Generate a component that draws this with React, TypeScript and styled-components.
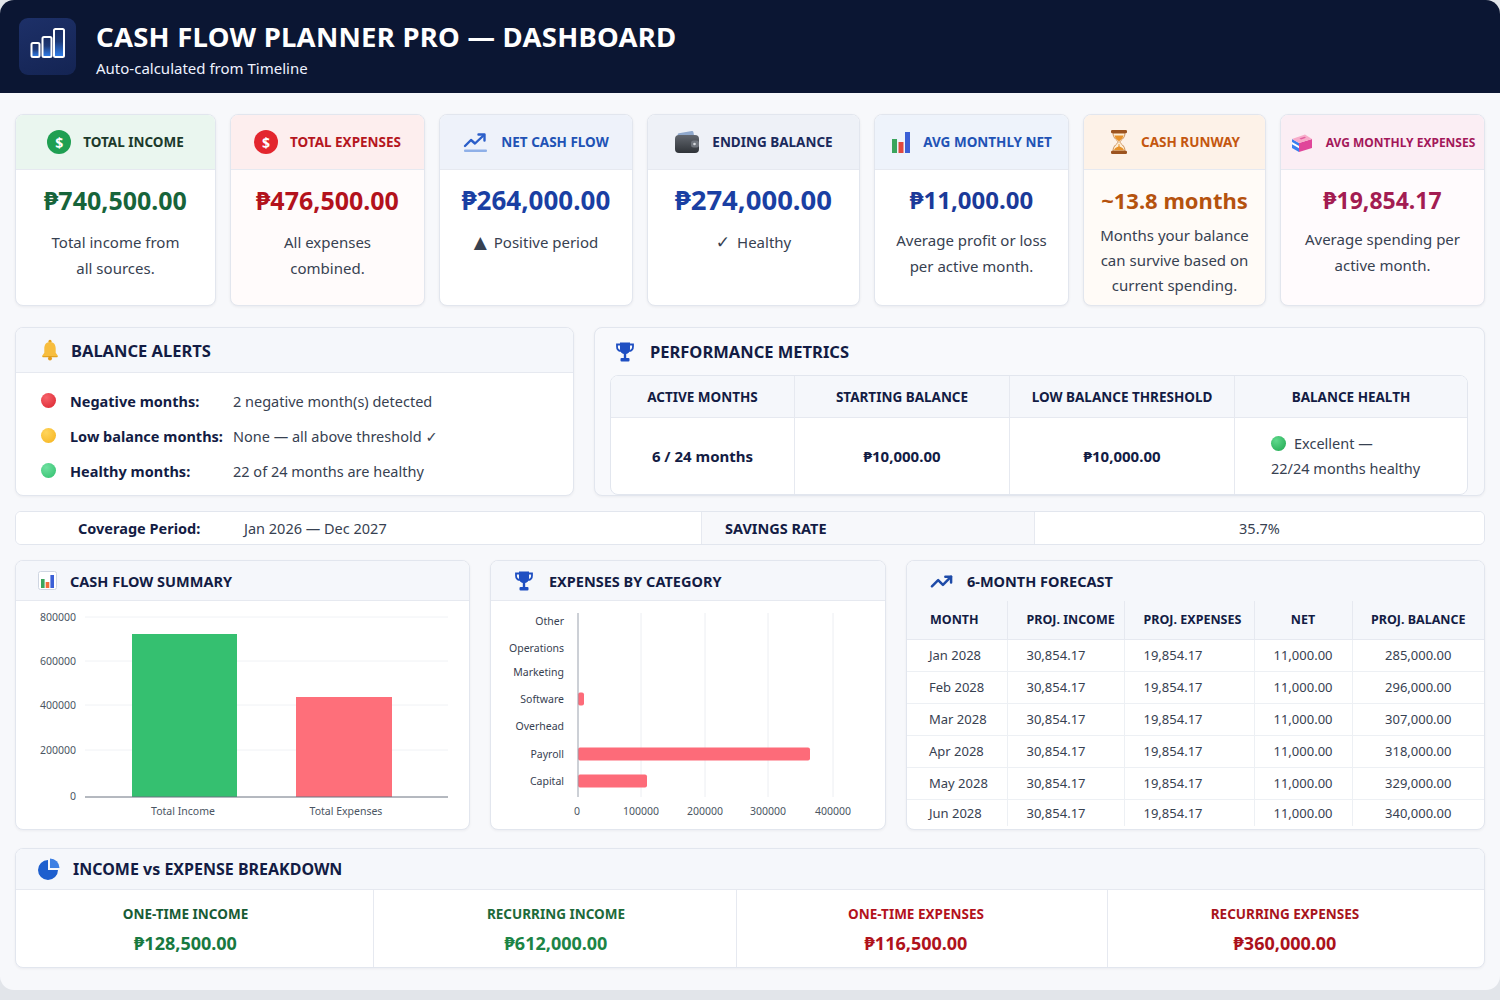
import React from "react";
import styled, { createGlobalStyle } from "styled-components";
import { TrendingUp } from "lucide-react";

const FONT = `"Noto Sans", "Open Sans", "DejaVu Sans", sans-serif`;
const NAVY = "#131c44";
const LINE = "#e6e9f0";

const GlobalStyle = createGlobalStyle`
  *, *::before, *::after { box-sizing: border-box; }
  html, body { margin: 0; padding: 0; }
  body { background: #e2e5ea; font-family: ${FONT}; color: #1f2937; }
`;

const Window = styled.div`
  width: 1500px;
  height: 990px;
  border-radius: 14px;
  overflow: hidden;
  background: #f7f8fb;
  display: flex;
  flex-direction: column;
`;

/* ---------- header ---------- */
const Header = styled.header`
  height: 93px;
  flex: none;
  background: #0b1633;
  display: flex;
  align-items: center;
  gap: 20px;
  padding-left: 19px;
`;
const LogoBox = styled.div`
  width: 57px;
  height: 57px;
  border-radius: 9px;
  background: linear-gradient(160deg, #1d3068 0%, #142453 100%);
  display: flex;
  align-items: center;
  justify-content: center;
`;
const TitleBlock = styled.div`
  display: flex;
  flex-direction: column;
  padding-top: 4px;
`;
const Title = styled.h1`
  margin: 0;
  font-size: 27.5px;
  line-height: 34px;
  font-weight: 700;
  color: #ffffff;
  letter-spacing: 0.25px;
`;
const Subtitle = styled.div`
  margin-top: 4px;
  font-size: 15px;
  line-height: 20px;
  color: #eef2ff;
`;

/* ---------- layout ---------- */
const Main = styled.main`
  padding: 21px 15px 0;
  display: flex;
  flex-direction: column;
`;
const Row = styled.div<{ $cols: string; $gap: number; $mt: number }>`
  display: grid;
  grid-template-columns: ${(p) => p.$cols};
  column-gap: ${(p) => p.$gap}px;
  margin-top: ${(p) => p.$mt}px;
`;

/* ---------- KPI cards ---------- */
const KpiCard = styled.div<{ $body: string }>`
  height: 192px;
  background: ${(p) => p.$body};
  border: 1px solid #e2e6ee;
  border-radius: 8px;
  overflow: hidden;
  box-shadow: 0 1px 3px rgba(15, 23, 42, 0.06);
`;
const KpiHead = styled.div<{ $bg: string }>`
  height: 55px;
  display: flex;
  align-items: center;
  justify-content: center;
  gap: 12px;
  background: ${(p) => p.$bg};
  border-bottom: 1px solid ${LINE};
`;
const KpiTitle = styled.div<{ $color: string; $size: number }>`
  font-size: ${(p) => p.$size}px;
  font-weight: 700;
  color: ${(p) => p.$color};
  white-space: nowrap;
`;
const KpiBody = styled.div`
  padding: 12px 8px 0;
  text-align: center;
`;
const KpiValue = styled.div<{ $color: string; $size: number }>`
  font-size: ${(p) => p.$size}px;
  line-height: 36px;
  font-weight: 700;
  color: ${(p) => p.$color};
  white-space: nowrap;
`;
const KpiDesc = styled.div<{ $mt: number; $lh: number }>`
  margin-top: ${(p) => p.$mt}px;
  font-size: 15px;
  line-height: ${(p) => p.$lh}px;
  color: #374151;
`;
const Glyph = styled.span`
  display: inline-block;
  font-size: 17px;
  margin-right: 7px;
  color: #374151;
`;
const DollarBadge = styled.span<{ $bg: string }>`
  width: 24px;
  height: 24px;
  border-radius: 50%;
  background: ${(p) => p.$bg};
  color: #fff;
  font-weight: 700;
  font-size: 14px;
  display: inline-flex;
  align-items: center;
  justify-content: center;
`;

/* ---------- panels ---------- */
const Panel = styled.section<{ $bg?: string; $h: number }>`
  height: ${(p) => p.$h}px;
  background: ${(p) => p.$bg ?? "#ffffff"};
  border: 1px solid #e2e6ee;
  border-radius: 8px;
  overflow: hidden;
  box-shadow: 0 1px 3px rgba(15, 23, 42, 0.05);
  display: flex;
  flex-direction: column;
`;
const PanelHead = styled.div<{ $h: number; $pl: number; $gap: number; $bg?: string; $line?: boolean }>`
  height: ${(p) => p.$h}px;
  flex: none;
  display: flex;
  align-items: center;
  gap: ${(p) => p.$gap}px;
  padding-left: ${(p) => p.$pl}px;
  background: ${(p) => p.$bg ?? "transparent"};
  border-bottom: ${(p) => (p.$line ? `1px solid ${LINE}` : "none")};
`;
const PanelTitle = styled.h2<{ $size: number }>`
  margin: 0;
  font-size: ${(p) => p.$size}px;
  font-weight: 700;
  color: ${NAVY};
  white-space: nowrap;
`;

/* alerts */
const AlertBody = styled.div`
  padding: 10px 0 0 25px;
  display: grid;
  grid-template-columns: 14px 148px 1fr;
  column-gap: 15px;
  grid-auto-rows: 35px;
  align-items: center;
`;
const Dot = styled.span<{ $c: string; $d: string }>`
  width: 15px;
  height: 15px;
  border-radius: 50%;
  background: radial-gradient(circle at 35% 30%, ${(p) => p.$c} 0%, ${(p) => p.$d} 100%);
  display: inline-block;
`;
const AlertLabel = styled.span`
  font-size: 14.5px;
  font-weight: 700;
  color: ${NAVY};
  white-space: nowrap;
`;
const AlertValue = styled.span`
  font-size: 14.5px;
  color: #374151;
  white-space: nowrap;
`;

/* metrics */
const MetricsWrap = styled.div`
  padding: 0 16px 1px 15px;
`;
const MetricsGrid = styled.div`
  display: grid;
  grid-template-columns: 184px 215px 225px 1fr;
  grid-template-rows: 42px 76px;
  background: #fff;
  border: 1px solid #e2e6ee;
  border-radius: 8px;
  overflow: hidden;
`;
const MetricHead = styled.div`
  display: flex;
  align-items: center;
  justify-content: center;
  background: #f5f7fb;
  border-bottom: 1px solid ${LINE};
  border-right: 1px solid ${LINE};
  font-size: 13.5px;
  font-weight: 700;
  color: ${NAVY};
  &:nth-child(4) { border-right: none; }
`;
const MetricCell = styled.div<{ $start?: boolean }>`
  display: flex;
  flex-direction: column;
  align-items: ${(p) => (p.$start ? "flex-start" : "center")};
  justify-content: center;
  padding-left: ${(p) => (p.$start ? 36 : 0)}px;
  border-right: 1px solid ${LINE};
  font-size: 15px;
  font-weight: 700;
  color: ${NAVY};
  &:last-child { border-right: none; }
`;
const HealthLine = styled.div`
  display: flex;
  align-items: center;
  gap: 8px;
  font-size: 14.5px;
  font-weight: 400;
  line-height: 25px;
  color: #374151;
`;

/* info bar */
const InfoBar = styled.div`
  margin-top: 15px;
  height: 34px;
  display: grid;
  grid-template-columns: 685px 333px 1fr;
  background: #fff;
  border: 1px solid #e2e6ee;
  border-radius: 6px;
  overflow: hidden;
`;
const InfoCell = styled.div<{ $bg?: string; $center?: boolean; $pl?: number }>`
  display: flex;
  align-items: center;
  justify-content: ${(p) => (p.$center ? "center" : "flex-start")};
  padding-left: ${(p) => p.$pl ?? 0}px;
  background: ${(p) => p.$bg ?? "#fff"};
  border-left: 1px solid ${LINE};
  font-size: 14.5px;
  color: #374151;
  &:first-child { border-left: none; }
`;
const InfoLabel = styled.span<{ $w?: number }>`
  width: ${(p) => (p.$w ? `${p.$w}px` : "auto")};
  font-weight: 700;
  color: ${NAVY};
  white-space: nowrap;
`;

/* forecast table */
const ForecastTable = styled.table`
  width: 100%;
  border-collapse: collapse;
  table-layout: fixed;
`;
const Col = styled.col<{ $w: number }>`
  width: ${(p) => p.$w}px;
`;
const Th = styled.th<{ $center?: boolean; $pl?: number }>`
  height: 38px;
  padding: 0 0 0 ${(p) => p.$pl ?? 0}px;
  text-align: ${(p) => (p.$center ? "center" : "left")};
  background: #f5f7fb;
  font-size: 12.5px;
  font-weight: 700;
  color: ${NAVY};
  border-bottom: 1px solid ${LINE};
  border-right: 1px solid ${LINE};
  white-space: nowrap;
  &:last-child { border-right: none; }
`;
const Td = styled.td<{ $center?: boolean; $pl?: number }>`
  height: 32px;
  padding: 0 0 0 ${(p) => p.$pl ?? 0}px;
  text-align: ${(p) => (p.$center ? "center" : "left")};
  font-size: 13px;
  color: #374151;
  border-bottom: 1px solid #edf0f4;
  border-right: 1px solid #edf0f4;
  white-space: nowrap;
  &:last-child { border-right: none; }
  tr:last-child > & { border-bottom: none; height: 27px; }
`;

/* breakdown */
const BreakGrid = styled.div`
  display: grid;
  grid-template-columns: 357fr 363fr 371fr 377fr;
  flex: 1;
`;
const BreakCell = styled.div<{ $shift: number }>`
  padding-top: 14px;
  text-align: center;
  border-left: 1px solid ${LINE};
  & > * { transform: translateX(${(p) => p.$shift}px); }
  &:first-child { border-left: none; }
`;
const BreakLabel = styled.div<{ $color: string }>`
  font-size: 13.5px;
  line-height: 20px;
  font-weight: 700;
  color: ${(p) => p.$color};
`;
const BreakValue = styled.div<{ $color: string }>`
  margin-top: 6px;
  font-size: 18px;
  line-height: 26px;
  font-weight: 700;
  color: ${(p) => p.$color};
`;

const ChartSvg = styled.svg`
  display: block;
  font-family: ${FONT};
`;

/* ---------- icons ---------- */
const LogoIcon = () => (
  <svg width="57" height="57" viewBox="0 0 57 57">
    <defs>
      <linearGradient id="lg" x1="0" y1="0" x2="0" y2="1">
        <stop offset="0" stopColor="#3b8cff" stopOpacity="0" />
        <stop offset="0.45" stopColor="#3b8cff" stopOpacity="0.15" />
        <stop offset="1" stopColor="#2f80ed" stopOpacity="1" />
      </linearGradient>
    </defs>
    <rect x="12.5" y="25" width="8" height="14" rx="1.5" fill="url(#lg)" stroke="#fff" strokeWidth="2" />
    <rect x="23.5" y="19" width="9" height="20" rx="1.5" fill="url(#lg)" stroke="#fff" strokeWidth="2" />
    <rect x="35" y="11" width="10" height="28" rx="1.5" fill="url(#lg)" stroke="#fff" strokeWidth="2" />
  </svg>
);

const TrendUnderline = () => (
  <svg width="26" height="22" viewBox="0 0 26 22">
    <polyline points="2,15 8,9 12,12.5 21,4" fill="none" stroke="#2c5fc9" strokeWidth="2.4" strokeLinejoin="round" strokeLinecap="round" />
    <polyline points="15.5,3.5 21.5,3.5 21.5,9.5" fill="none" stroke="#2c5fc9" strokeWidth="2.4" strokeLinejoin="round" strokeLinecap="round" />
    <rect x="1" y="18.5" width="23" height="2.5" rx="1" fill="#8fb0e8" />
  </svg>
);

const WalletIcon = () => (
  <svg width="26" height="24" viewBox="0 0 26 24">
    <defs>
      <linearGradient id="wg" x1="0" y1="0" x2="0" y2="1">
        <stop offset="0" stopColor="#62676f" />
        <stop offset="1" stopColor="#2f3338" />
      </linearGradient>
    </defs>
    <rect x="4" y="2" width="16" height="8" rx="1.5" fill="#8fa8cc" transform="rotate(-10 12 6)" />
    <rect x="1" y="5" width="24" height="18" rx="4" fill="url(#wg)" />
    <rect x="17" y="10.5" width="8" height="7" rx="2.5" fill="#70757d" />
    <circle cx="20.5" cy="14" r="1.3" fill="#d6d9de" />
  </svg>
);

const BarsEmoji = () => (
  <svg width="20" height="22" viewBox="0 0 20 22">
    <rect x="1" y="8" width="5" height="14" fill="#3ba55d" />
    <rect x="7.5" y="11" width="5" height="11" fill="#e0483e" />
    <rect x="14" y="1" width="5" height="21" fill="#3b5fd6" />
  </svg>
);

const SummaryIcon = () => (
  <svg width="19" height="19" viewBox="0 0 19 19">
    <rect x="0.5" y="0.5" width="18" height="18" rx="2" fill="#fff" stroke="#cfd6e2" />
    <rect x="3" y="8" width="3.6" height="9" fill="#3ba55d" />
    <rect x="7.7" y="11" width="3.6" height="6" fill="#f26b3a" />
    <rect x="12.4" y="4" width="3.6" height="13" fill="#3b5fd6" />
  </svg>
);

const HourglassIcon = () => (
  <svg width="20" height="26" viewBox="0 0 20 26">
    <path d="M4 4 C4 10 9 11 9 13 C9 15 4 16 4 22 L16 22 C16 16 11 15 11 13 C11 11 16 10 16 4 Z" fill="#fdeed6" stroke="#c07a3a" strokeWidth="0.8" />
    <path d="M5.4 6.5 L14.6 6.5 C14 9.8 11.2 11 10 12.4 C8.8 11 6 9.8 5.4 6.5 Z" fill="#e8922a" />
    <path d="M9.6 15 L10.4 15 L10.6 17.5 C13 18.4 14.6 19.6 15 21.2 L5 21.2 C5.4 19.6 7 18.4 9.4 17.5 Z" fill="#e8922a" />
    <rect x="2" y="1" width="16" height="3.2" rx="1.2" fill="#9c5420" />
    <rect x="2" y="21.8" width="16" height="3.2" rx="1.2" fill="#9c5420" />
  </svg>
);

const BoxIcon = () => (
  <svg width="24" height="24" viewBox="0 0 24 24">
    <polygon points="2,9 9,13 9,22 2,18" fill="#3b7ff0" />
    <polygon points="2,12 9,16 9,18.2 2,14.2" fill="#ffffff" />
    <polygon points="9,13 22,9 22,18 9,22" fill="#e0469a" />
    <polygon points="2,9 15,4.5 22,9 9,13" fill="#f7abc9" />
    <polygon points="9.5,8.5 14.5,6.8 16,7.8 11,9.5" fill="#e35d9f" />
  </svg>
);

const BellIcon = () => (
  <svg width="20" height="22" viewBox="0 0 20 22">
    <circle cx="10" cy="2.4" r="1.6" fill="#e3a21f" />
    <path d="M10 3 C6.2 3 4.3 5.8 4.3 9.5 L4.3 13.8 L2 17 L18 17 L15.7 13.8 L15.7 9.5 C15.7 5.8 13.8 3 10 3 Z" fill="#f7bd3e" />
    <path d="M2 17 L18 17 L17.2 18.2 L2.8 18.2 Z" fill="#e3a21f" />
    <circle cx="10" cy="19.6" r="2" fill="#e39a1a" />
  </svg>
);

const TrophyIcon = () => (
  <svg width="20" height="22" viewBox="0 0 20 22">
    <path d="M5 1.5 H15 V8 C15 11 13 13.2 10 13.2 C7 13.2 5 11 5 8 Z" fill="#1f4fc2" />
    <path d="M5 3.5 H2 V5.5 C2 8 3.6 9.8 5.8 10" fill="none" stroke="#1f4fc2" strokeWidth="1.8" />
    <path d="M15 3.5 H18 V5.5 C18 8 16.4 9.8 14.2 10" fill="none" stroke="#1f4fc2" strokeWidth="1.8" />
    <rect x="8.8" y="13" width="2.4" height="4" fill="#1f4fc2" />
    <rect x="5.5" y="17" width="9" height="3.6" rx="1" fill="#1f4fc2" />
  </svg>
);

const PieIcon = () => (
  <svg width="22" height="22" viewBox="0 0 22 22">
    <path d="M10 12 L10 2 A10 10 0 1 0 20 12 Z" fill="#1e5fce" />
    <path d="M12 10 L12 0.5 A9.5 9.5 0 0 1 21.5 10 Z" fill="#3d7fe3" />
  </svg>
);

/* ---------- charts ---------- */
const CF_TICKS = [
  { label: "800000", y: 16 },
  { label: "600000", y: 60 },
  { label: "400000", y: 104 },
  { label: "200000", y: 149 },
  { label: "0", y: 195 },
];

const CashFlowChart = () => (
  <ChartSvg width="454" height="228" viewBox="0 0 454 228">
    {CF_TICKS.map((t) => (
      <g key={t.label}>
        {t.label !== "0" && <line x1="69" x2="432" y1={t.y} y2={t.y} stroke="#f0f2f5" />}
        <text x="60" y={t.y + 4} textAnchor="end" fontSize="10.5" fill="#4b5563">
          {t.label}
        </text>
      </g>
    ))}
    <rect x="116" y="33" width="105" height="163" fill="#35c070" />
    <rect x="280" y="96" width="96" height="100" fill="#fe6f7a" />
    <line x1="69" x2="432" y1="196" y2="196" stroke="#6b7280" />
    <text x="167" y="214" textAnchor="middle" fontSize="10.5" fill="#4b5563">Total Income</text>
    <text x="330" y="214" textAnchor="middle" fontSize="10.5" fill="#4b5563">Total Expenses</text>
  </ChartSvg>
);

const CATS = [
  { name: "Other", y: 20, w: 0 },
  { name: "Operations", y: 47, w: 0 },
  { name: "Marketing", y: 71, w: 0 },
  { name: "Software", y: 98, w: 6 },
  { name: "Overhead", y: 125, w: 0 },
  { name: "Payroll", y: 153, w: 232 },
  { name: "Capital", y: 180, w: 69 },
];
const X_TICKS = [
  { label: "0", x: 86 },
  { label: "100000", x: 150 },
  { label: "200000", x: 214 },
  { label: "300000", x: 277 },
  { label: "400000", x: 342 },
];

const ExpenseChart = () => (
  <ChartSvg width="396" height="228" viewBox="0 0 396 228">
    {X_TICKS.slice(1).map((t) => (
      <line key={t.label} x1={t.x} x2={t.x} y1="12" y2="196" stroke="#eceef2" />
    ))}
    {CATS.map((c) => (
      <g key={c.name}>
        <text x="73" y={c.y + 4} textAnchor="end" fontSize="10.5" fill="#374151">
          {c.name}
        </text>
        {c.w > 0 && <rect x="87" y={c.y - 6.5} width={c.w} height="13" rx="2" fill="#fd6b79" />}
      </g>
    ))}
    <line x1="87" x2="87" y1="12" y2="196" stroke="#9aa1ad" />
    {X_TICKS.map((t) => (
      <text key={t.label} x={t.x} y="214" textAnchor="middle" fontSize="10.5" fill="#4b5563">
        {t.label}
      </text>
    ))}
  </ChartSvg>
);

/* ---------- data ---------- */
type Kpi = {
  title: string;
  titleColor: string;
  titleSize: number;
  headBg: string;
  bodyBg: string;
  icon: React.ReactNode;
  value: string;
  valueColor: string;
  valueSize: number;
  glyph?: string;
  desc: string[];
  mt: number;
  lh: number;
};

const KPIS: Kpi[] = [
  { title: "TOTAL INCOME", titleColor: "#1c3a2b", titleSize: 13.5, headBg: "#eaf6ef", bodyBg: "#ffffff", icon: <DollarBadge $bg="#1f9f52">$</DollarBadge>, value: "₱740,500.00", valueColor: "#17643a", valueSize: 25, desc: ["Total income from", "all sources."], mt: 11, lh: 26 },
  { title: "TOTAL EXPENSES", titleColor: "#b5161e", titleSize: 13.5, headBg: "#fdeeee", bodyBg: "#fffbfb", icon: <DollarBadge $bg="#e3262e">$</DollarBadge>, value: "₱476,500.00", valueColor: "#b3121c", valueSize: 25, desc: ["All expenses", "combined."], mt: 11, lh: 26 },
  { title: "NET CASH FLOW", titleColor: "#2152b5", titleSize: 13.5, headBg: "#eef2fa", bodyBg: "#ffffff", icon: <TrendUnderline />, value: "₱264,000.00", valueColor: "#1a3fa3", valueSize: 26, glyph: "▲", desc: ["Positive period"], mt: 11, lh: 26 },
  { title: "ENDING BALANCE", titleColor: "#1b2a5c", titleSize: 13.5, headBg: "#eef1f7", bodyBg: "#ffffff", icon: <WalletIcon />, value: "₱274,000.00", valueColor: "#1a3fa3", valueSize: 27.5, glyph: "✓", desc: ["Healthy"], mt: 11, lh: 26 },
  { title: "AVG MONTHLY NET", titleColor: "#2152b5", titleSize: 13.5, headBg: "#eef3fb", bodyBg: "#ffffff", icon: <BarsEmoji />, value: "₱11,000.00", valueColor: "#1b3a99", valueSize: 24, desc: ["Average profit or loss", "per active month."], mt: 9, lh: 26 },
  { title: "CASH RUNWAY", titleColor: "#c4570f", titleSize: 13.5, headBg: "#fdf2e8", bodyBg: "#fffbf7", icon: <HourglassIcon />, value: "~13.8 months", valueColor: "#b5520e", valueSize: 22, desc: ["Months your balance", "can survive based on", "current spending."], mt: 5, lh: 25 },
  { title: "AVG MONTHLY EXPENSES", titleColor: "#a3185a", titleSize: 12, headBg: "#fbeef4", bodyBg: "#fffbfd", icon: <BoxIcon />, value: "₱19,854.17", valueColor: "#a31c52", valueSize: 23, desc: ["Average spending per", "active month."], mt: 8, lh: 26 },
];

const ALERTS = [
  { label: "Negative months:", value: "2 negative month(s) detected", c: "#f7626a", d: "#d9232d" },
  { label: "Low balance months:", value: "None — all above threshold ✓", c: "#ffd55c", d: "#f5b21c" },
  { label: "Healthy months:", value: "22 of 24 months are healthy", c: "#6fe0a0", d: "#2fbf6c" },
];

const FORECAST = [
  ["Jan 2028", "285,000.00"],
  ["Feb 2028", "296,000.00"],
  ["Mar 2028", "307,000.00"],
  ["Apr 2028", "318,000.00"],
  ["May 2028", "329,000.00"],
  ["Jun 2028", "340,000.00"],
];

const BREAKDOWN = [
  { label: "ONE-TIME INCOME", value: "₱128,500.00", lc: "#185c35", vc: "#18793f", shift: -9 },
  { label: "RECURRING INCOME", value: "₱612,000.00", lc: "#1d6a3a", vc: "#1c8445", shift: 1 },
  { label: "ONE-TIME EXPENSES", value: "₱116,500.00", lc: "#b3121c", vc: "#b0121b", shift: -6 },
  { label: "RECURRING EXPENSES", value: "₱360,000.00", lc: "#a8141c", vc: "#ab111b", shift: -11 },
];

export default function App() {
  return (
    <>
      <GlobalStyle />
      <Window>
        <Header>
          <LogoBox>
            <LogoIcon />
          </LogoBox>
          <TitleBlock>
            <Title>CASH FLOW PLANNER PRO — DASHBOARD</Title>
            <Subtitle>Auto-calculated from Timeline</Subtitle>
          </TitleBlock>
        </Header>

        <Main>
          <Row $cols="201px 195px 194px 213px 195px 183px 1fr" $gap={14} $mt={0}>
            {KPIS.map((k) => (
              <KpiCard key={k.title} $body={k.bodyBg}>
                <KpiHead $bg={k.headBg}>
                  {k.icon}
                  <KpiTitle $color={k.titleColor} $size={k.titleSize}>
                    {k.title}
                  </KpiTitle>
                </KpiHead>
                <KpiBody>
                  <KpiValue $color={k.valueColor} $size={k.valueSize}>
                    {k.value}
                  </KpiValue>
                  <KpiDesc $mt={k.mt} $lh={k.lh}>
                    {k.desc.map((line, i) => (
                      <div key={i}>
                        {i === 0 && k.glyph && <Glyph>{k.glyph}</Glyph>}
                        {line}
                      </div>
                    ))}
                  </KpiDesc>
                </KpiBody>
              </KpiCard>
            ))}
          </Row>

          <Row $cols="559px 1fr" $gap={20} $mt={21}>
            <Panel $h={169}>
              <PanelHead $h={45} $pl={24} $gap={11} $bg="#f5f7fb" $line>
                <BellIcon />
                <PanelTitle $size={16.5}>BALANCE ALERTS</PanelTitle>
              </PanelHead>
              <AlertBody>
                {ALERTS.map((a) => (
                  <React.Fragment key={a.label}>
                    <Dot $c={a.c} $d={a.d} />
                    <AlertLabel>{a.label}</AlertLabel>
                    <AlertValue>{a.value}</AlertValue>
                  </React.Fragment>
                ))}
              </AlertBody>
            </Panel>

            <Panel $h={169} $bg="#f8f9fc">
              <PanelHead $h={47} $pl={20} $gap={15}>
                <TrophyIcon />
                <PanelTitle $size={16.5}>PERFORMANCE METRICS</PanelTitle>
              </PanelHead>
              <MetricsWrap>
                <MetricsGrid>
                  <MetricHead>ACTIVE MONTHS</MetricHead>
                  <MetricHead>STARTING BALANCE</MetricHead>
                  <MetricHead>LOW BALANCE THRESHOLD</MetricHead>
                  <MetricHead>BALANCE HEALTH</MetricHead>
                  <MetricCell>6 / 24 months</MetricCell>
                  <MetricCell>₱10,000.00</MetricCell>
                  <MetricCell>₱10,000.00</MetricCell>
                  <MetricCell $start>
                    <HealthLine>
                      <Dot $c="#5fd98c" $d="#1fa64f" />
                      Excellent —
                    </HealthLine>
                    <HealthLine>22/24 months healthy</HealthLine>
                  </MetricCell>
                </MetricsGrid>
              </MetricsWrap>
            </Panel>
          </Row>

          <InfoBar>
            <InfoCell $pl={62}>
              <InfoLabel $w={166}>Coverage Period:</InfoLabel>
              Jan 2026 — Dec 2027
            </InfoCell>
            <InfoCell $pl={23} $bg="#f7f8fb">
              <InfoLabel>SAVINGS RATE</InfoLabel>
            </InfoCell>
            <InfoCell $center>35.7%</InfoCell>
          </InfoBar>

          <Row $cols="455px 396px 1fr" $gap={20} $mt={15}>
            <Panel $h={270}>
              <PanelHead $h={40} $pl={22} $gap={13} $bg="#f5f7fb" $line>
                <SummaryIcon />
                <PanelTitle $size={14.5}>CASH FLOW SUMMARY</PanelTitle>
              </PanelHead>
              <CashFlowChart />
            </Panel>

            <Panel $h={270}>
              <PanelHead $h={40} $pl={23} $gap={15} $bg="#f5f7fb" $line>
                <TrophyIcon />
                <PanelTitle $size={14.5}>EXPENSES BY CATEGORY</PanelTitle>
              </PanelHead>
              <ExpenseChart />
            </Panel>

            <Panel $h={270}>
              <PanelHead $h={40} $pl={23} $gap={14} $bg="#f5f7fb">
                <TrendingUp size={23} color="#1e4ba8" strokeWidth={2.6} />
                <PanelTitle $size={14.5}>6-MONTH FORECAST</PanelTitle>
              </PanelHead>
              <ForecastTable>
                <colgroup>
                  <Col $w={100} />
                  <Col $w={117} />
                  <Col $w={130} />
                  <Col $w={98} />
                  <Col $w={132} />
                </colgroup>
                <thead>
                  <tr>
                    <Th $pl={23}>MONTH</Th>
                    <Th $pl={19}>PROJ. INCOME</Th>
                    <Th $pl={19}>PROJ. EXPENSES</Th>
                    <Th $center>NET</Th>
                    <Th $center>PROJ. BALANCE</Th>
                  </tr>
                </thead>
                <tbody>
                  {FORECAST.map(([m, bal]) => (
                    <tr key={m}>
                      <Td $pl={22}>{m}</Td>
                      <Td $pl={19}>30,854.17</Td>
                      <Td $pl={19}>19,854.17</Td>
                      <Td $center>11,000.00</Td>
                      <Td $center>{bal}</Td>
                    </tr>
                  ))}
                </tbody>
              </ForecastTable>
            </Panel>
          </Row>

          <Row $cols="1fr" $gap={0} $mt={18}>
            <Panel $h={120}>
              <PanelHead $h={41} $pl={22} $gap={13} $bg="#f5f7fb" $line>
                <PieIcon />
                <PanelTitle $size={16}>INCOME vs EXPENSE BREAKDOWN</PanelTitle>
              </PanelHead>
              <BreakGrid>
                {BREAKDOWN.map((b) => (
                  <BreakCell key={b.label} $shift={b.shift}>
                    <BreakLabel $color={b.lc}>{b.label}</BreakLabel>
                    <BreakValue $color={b.vc}>{b.value}</BreakValue>
                  </BreakCell>
                ))}
              </BreakGrid>
            </Panel>
          </Row>
        </Main>
      </Window>
    </>
  );
}
